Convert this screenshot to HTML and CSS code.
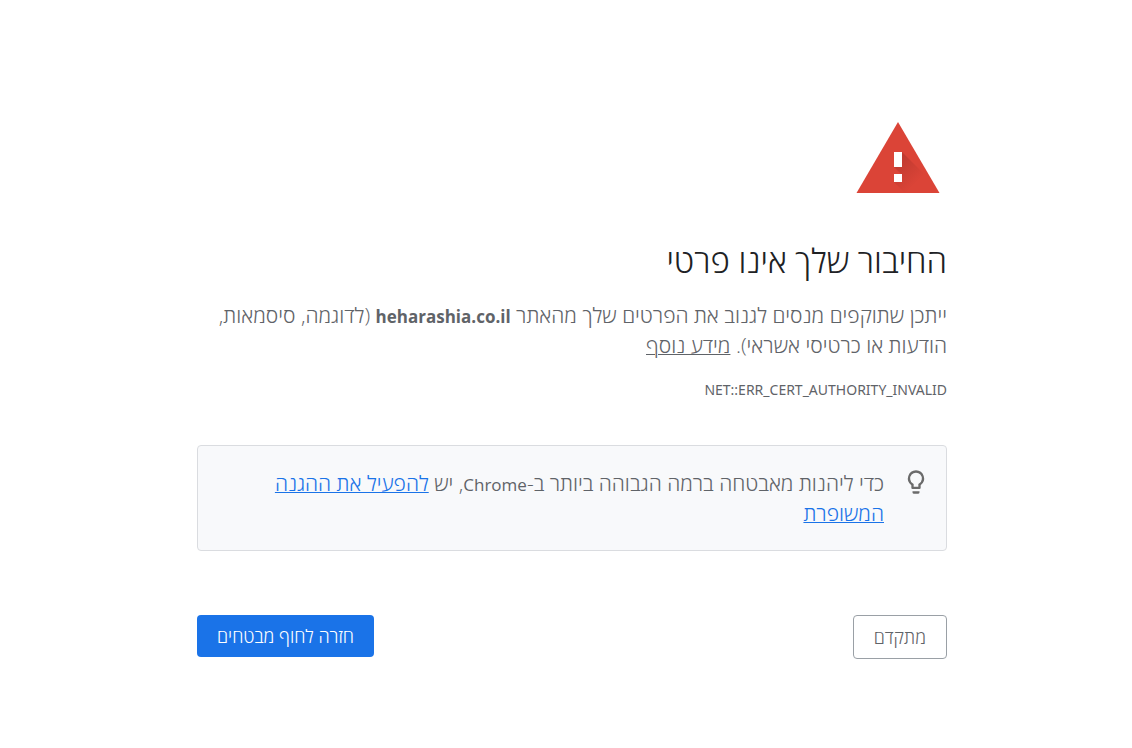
FILE: index.html
```html
<!DOCTYPE html>
<html lang="he" dir="rtl">
<head>
  <meta charset="UTF-8" />
  <meta name="viewport" content="width=device-width, initial-scale=1.0"/>
  <title>שגיאת פרטיות</title>
  <link rel="stylesheet" href="styles.css">
</head>
<body>
  <main class="interstitial">
    <svg class="warning-icon" viewBox="0 0 96 96" aria-hidden="true">
      <defs>
        <linearGradient id="shade" gradientUnits="userSpaceOnUse" x1="46" y1="52" x2="66" y2="72">
          <stop offset="0" stop-color="#c03a30"/>
          <stop offset="1" stop-color="#db4437"/>
        </linearGradient>
      </defs>
      <path class="triangle" d="M47 12 88.500 83H5.500z"/>
      <path fill="url(#shade)" d="M51 42 73 64 84 83H69L43 57zM51 64 70 83H54L43 72z"/>
      <path class="mark" d="M43 42h8v15h-8zM43 64h8v8h-8z"/>
    </svg>

    <h1>החיבור שלך אינו פרטי</h1>
    <p class="message">ייתכן שתוקפים מנסים לגנוב את הפרטים שלך מהאתר <strong>heharashia.co.il</strong> (לדוגמה, סיסמאות, הודעות או כרטיסי אשראי). <a class="learn-more" href="#">מידע נוסף</a></p>
    <div class="error-code">NET::ERR_CERT_AUTHORITY_INVALID</div>

    <div class="promo">
      <svg class="bulb" viewBox="0 0 24 24" aria-hidden="true">
        <path d="M12 2a7 7 0 0 0-4 12.700V17a1 1 0 0 0 1 1h6a1 1 0 0 0 1-1v-2.300A7 7 0 0 0 12 2zm2.850 11.100-.850.600V16h-4v-2.300l-.850-.600a5 5 0 1 1 5.700 0zM9 20h6v1a1 1 0 0 1-1 1h-4a1 1 0 0 1-1-1z"/>
      </svg>
      <p>כדי ליהנות מאבטחה ברמה הגבוהה ביותר ב-<span class="latin">Chrome</span>, יש <a href="#">להפעיל את ההגנה המשופרת</a></p>
    </div>

    <div class="buttons">
      <button class="advanced" type="button">מתקדם</button>
      <button class="primary" type="button">חזרה לחוף מבטחים</button>
    </div>
  </main>
</body>
</html>
```
FILE: styles.css
```css
* {
  box-sizing: border-box;
}

body {
  margin: 0;
  background: #fff;
  color: #5f6368;
  font-family: "Open Sans", sans-serif;
  font-size: 21px;
  font-weight: 300;
  line-height: 30px;
}

.interstitial {
  width: 100%;
  max-width: 798px;
  margin: 0 auto;
  padding: 110px 18px 48px 30px;
}

.warning-icon {
  display: block;
  width: 96px;
  height: 96px;
}

.triangle {
  fill: #db4437;
}

.mark {
  fill: #fff;
}

h1 {
  margin: 36px 0 20px;
  color: #202124;
  font-size: 33px;
  font-weight: 300;
  line-height: 38px;
}

p {
  margin: 0;
}

strong {
  font-size: 17px;
  font-weight: 700;
  line-height: 1;
}

a {
  color: #1a73e8;
  text-decoration-thickness: 1px;
}

.learn-more {
  color: inherit;
}

.latin {
  font-size: 17px;
  font-weight: 400;
  line-height: 1;
}

.error-code {
  margin-top: 20px;
  font-family: "Noto Sans", sans-serif;
  font-size: 14px;
  font-weight: 400;
  line-height: 20px;
}

.promo {
  display: flex;
  gap: 18px;
  margin-top: 45px;
  padding: 22px 16px;
  border: 1px solid #dadce0;
  border-radius: 4px;
  background: #f8f9fb;
}

.bulb {
  flex: none;
  width: 28px;
  height: 28px;
  fill: #6b6b6b;
}

.buttons {
  display: flex;
  justify-content: space-between;
  align-items: flex-start;
  margin-top: 64px;
}

button {
  padding: 10px 20px;
  border: 0;
  border-radius: 4px;
  font-family: inherit;
  font-size: 18px;
  font-weight: 300;
  line-height: 22px;
  cursor: pointer;
}

.primary {
  background: #1a73e8;
  color: #fff;
}

.advanced {
  border: 1px solid #9aa0a6;
  background: #fff;
  color: #5f6368;
}
```
